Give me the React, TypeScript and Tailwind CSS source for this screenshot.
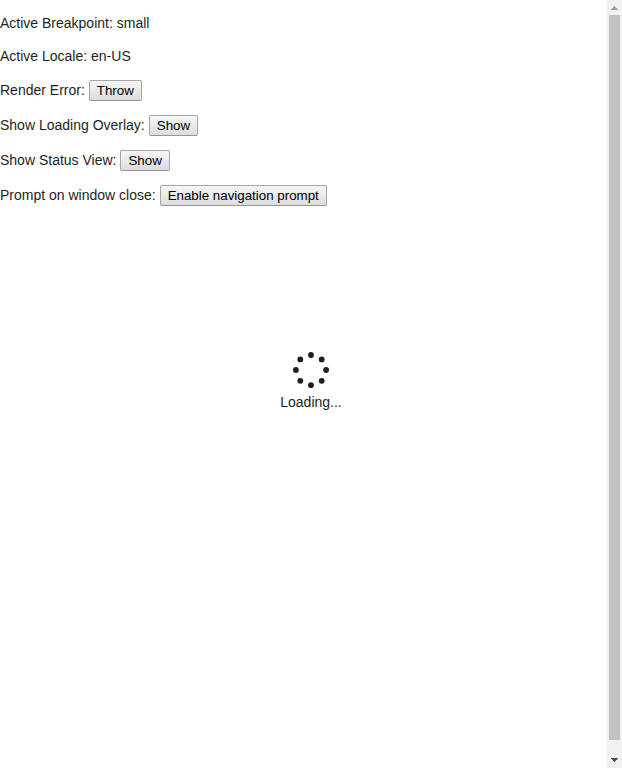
import type { ReactNode } from 'react';

function Row({ label, action }: { label: ReactNode; action: string }) {
  return (
    <div className="flex h-[21px] items-start">
      <span className="mr-[4px] leading-[21px]">{label}</span>
      <button
        type="button"
        className="box-border h-[21px] rounded-[2px] border border-[#a6a6a6] border-b-[#959595] bg-linear-to-b from-[#f6f6f6] to-[#dddddd] px-[7px] text-[13.333px] leading-[19px] text-black"
      >
        {action}
      </button>
    </div>
  );
}

const dots = [
  [18, 3],
  [28.7, 7.4],
  [33.1, 18],
  [28.7, 28.8],
  [18, 33.2],
  [7.3, 28.8],
  [2.9, 18],
  [7.3, 7.4],
];

function LoadingOverlay() {
  return (
    <div className="absolute inset-0 flex flex-col items-center pt-[352px]">
      <svg width="36" height="36" viewBox="0 0 36 36" fill="#1c1f21">
        {dots.map(([cx, cy]) => (
          <circle key={`${cx}-${cy}`} cx={cx} cy={cy} r="2.9" />
        ))}
      </svg>
      <span className="mt-[5px] leading-[19px]">Loading...</span>
    </div>
  );
}

function Scrollbar() {
  return (
    <div className="flex w-[15px] shrink-0 flex-col items-center bg-[#f1f1f1]">
      <svg width="15" height="15" viewBox="0 0 15 15" fill="#a3a3a3" shapeRendering="crispEdges">
        <path d="M7 6h1v1h1v1h1v1h1v1H4V9h1V8h1V7h1z" />
      </svg>
      <div className="h-[725px] w-[11px] bg-[#c1c1c1]" />
      <svg
        className="mt-auto"
        width="15"
        height="15"
        viewBox="0 0 15 15"
        fill="#505050"
        shapeRendering="crispEdges"
      >
        <path d="M4 5h7v1h-1v1h-1v1h-1v1h-1v-1h-1v-1h-1v-1h-1z" />
      </svg>
    </div>
  );
}

export default function App() {
  return (
    <div className="relative flex h-[768px] w-[622px] overflow-hidden bg-white font-['Liberation_Sans',Arial,sans-serif] text-[14px] text-[#1c1f21]">
      <main className="flex flex-1 flex-col gap-[14px] pt-[14px]">
        <p className="leading-[19px]">Active Breakpoint: small</p>
        <p className="leading-[19px]">Active Locale: en-US</p>
        <Row label="Render Error:" action="Throw" />
        <Row label="Show Loading Overlay:" action="Show" />
        <Row label="Show Status View:" action="Show" />
        <Row label="Prompt on window close:" action="Enable navigation prompt" />
      </main>
      <Scrollbar />
      <LoadingOverlay />
    </div>
  );
}
